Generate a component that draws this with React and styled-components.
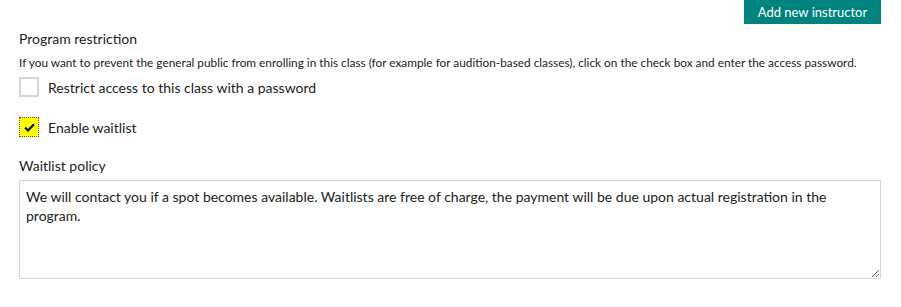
import { useState } from "react";
import styled, { createGlobalStyle } from "styled-components";

let GlobalStyle = createGlobalStyle`
    body {
        margin: 0;
        background: #fff;
        font-family: Lato, "Open Sans", sans-serif;
        color: #222;
    }
`;

let Page = styled.div`
    width: 901px;
    height: 307px;
    box-sizing: border-box;
    padding: 0 20px 0 19px;
    display: flex;
    flex-direction: column;
`;
let TopBar = styled.div`
    display: flex;
    justify-content: flex-end;
`;
let PrimaryButton = styled.button`
    height: 24px;
    width: 137px;
    margin: 0;
    padding: 0;
    border: 0;
    background-color: #00827f;
    color: #fff;
    font-family: inherit;
    font-size: 13px;
`;
let SectionTitle = styled.div`
    margin-top: 5px;
    font-size: 14px;
    line-height: 19px;
`;
let HelpText = styled.div`
    margin-top: 8px;
    font-size: 11.82px;
    line-height: 14px;
    white-space: nowrap;
`;
let CheckRow = styled.label`
    display: flex;
    align-items: center;
    gap: 9px;
    margin-top: ${(p) => p.$top}px;
    font-size: 14px;
    cursor: pointer;
`;
let Box = styled.span`
    width: 20px;
    height: 20px;
    box-sizing: border-box;
    display: flex;
    align-items: center;
    justify-content: center;
    border: ${(p) => (p.$checked ? "1px dotted #555" : "2px solid #d6d6d6")};
    background-color: ${(p) => (p.$checked ? "#ffff00" : "#fff")};
`;
let FieldLabel = styled.div`
    margin-top: 19px;
    font-size: 14px;
    line-height: 19px;
`;
let PolicyArea = styled.textarea`
    margin-top: 5px;
    width: 862px;
    height: 99px;
    box-sizing: border-box;
    padding: 6px 6px;
    border: 1px solid #d6d6d6;
    font-family: inherit;
    font-size: 14px;
    line-height: 19px;
    color: #222;
    outline: none;
`;

function CheckBox({ checked, label, top, onToggle }) {
    return (
        <CheckRow $top={top} onClick={onToggle}>
            <Box $checked={checked}>
                {checked && (
                    <svg width="11" height="9" viewBox="0 0 11 9">
                        <path d="M1 4.5 L4 7.5 L10 1.2" fill="none" stroke="#111" strokeWidth="2.2" />
                    </svg>
                )}
            </Box>
            {label}
        </CheckRow>
    );
}

function App() {
    let [restrict, setRestrict] = useState(false);
    let [waitlist, setWaitlist] = useState(true);
    let [policy, setPolicy] = useState(
        "We will contact you if a spot becomes available. Waitlists are free of charge, the payment will be due upon actual registration in the program."
    );

    return (
        <Page>
            <GlobalStyle />
            <TopBar>
                <PrimaryButton>Add new instructor</PrimaryButton>
            </TopBar>
            <SectionTitle>Program restriction</SectionTitle>
            <HelpText>
                If you want to prevent the general public from enrolling in this class (for example for audition-based classes), click on the check box and enter the access password.
            </HelpText>
            <CheckBox top={7} checked={restrict} label="Restrict access to this class with a password" onToggle={() => setRestrict(!restrict)} />
            <CheckBox top={20} checked={waitlist} label="Enable waitlist" onToggle={() => setWaitlist(!waitlist)} />
            <FieldLabel>Waitlist policy</FieldLabel>
            <PolicyArea value={policy} onChange={(e) => setPolicy(e.target.value)} />
        </Page>
    );
}

export default App;
